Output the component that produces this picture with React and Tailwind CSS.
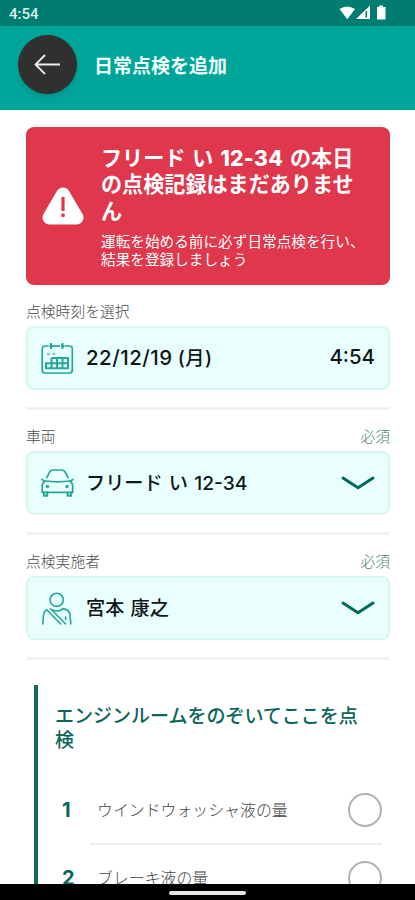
import React, { useState } from "react";

const WarningIcon = () => (
  <svg width="42" height="38" viewBox="0 0 42 38" className="shrink-0">
    <path
      d="M21 7.5 L34.5 30.5 H7.5 Z"
      fill="#fff"
      stroke="#fff"
      strokeWidth="14"
      strokeLinejoin="round"
    />
    <path d="M21 10 V24" stroke="#df374b" strokeWidth="3.2" />
    <rect x="19.3" y="26.5" width="3.5" height="3.5" rx="1" fill="#df374b" />
  </svg>
);

const CalendarIcon = () => (
  <svg width="33" height="33" viewBox="0 0 33 33" fill="none" stroke="#26a69a" strokeWidth="1.7" className="shrink-0">
    <path d="M7.5 4 H4 Q1.2 4 1.2 7 V28 Q1.2 31 4 31 H28.5 Q31.3 31 31.3 28 V7 Q31.3 4 28.5 4 H24" />
    <path d="M12 4 H19" />
    <path d="M10 1 V7 M21.5 1 V7" strokeWidth="2" />
    <path d="M8.5 4 H12 M20 4 H23.5" strokeWidth="2" />
    <path d="M10.5 16 H27 V26.3 H5 V21.2 H27 M10.5 16 V26.3 M16 16 V26.3 M21.5 16 V26.3" strokeWidth="2" strokeLinejoin="round" />
    <path d="M6 12 H9 M11.5 12 H14.5" strokeWidth="2.4" opacity="0.5" />
  </svg>
);

const CarIcon = () => (
  <svg width="33" height="28" viewBox="0 0 33 28" fill="none" stroke="#26a69a" strokeWidth="1.7" strokeLinecap="round" strokeLinejoin="round" className="shrink-0">
    <path d="M5.8 8.5 L8.3 3.6 Q9.7 1 12.3 1 H20.5 Q23.1 1 24.5 3.6 L27 8.5" />
    <path d="M4 12 Q16.5 13.6 29 12 Q31.7 14 31.7 17.5 V23.3 H1.2 V17.5 Q1.2 14 4 12 Z" />
    <path d="M2.9 23.5 V26.8 H6.3 V23.5 M26.7 23.5 V26.8 H30.1 V23.5" strokeWidth="2" />
    <path d="M1 10.5 L3.5 12 M32 10.5 L29.5 12" />
    <circle cx="6.5" cy="17.6" r="0.9" />
    <circle cx="26" cy="17.6" r="0.9" />
  </svg>
);

const DriverIcon = () => (
  <svg width="33" height="33" viewBox="0 0 33 33" fill="none" stroke="#26a69a" strokeWidth="1.6" strokeLinecap="round" strokeLinejoin="round" className="shrink-0">
    <circle cx="15.7" cy="7.8" r="6.6" />
    <path d="M1.8 32 L2.4 23.5 Q3 19 5.8 17.8 L19.6 32" />
    <path d="M9.6 16.8 L24.6 32" />
    <path d="M11.8 18 Q18.5 20.5 22 16.6 Q28 17.5 29 22.5 L29.8 32" />
    <path d="M24.6 25 V27.5" />
  </svg>
);

const Chevron = () => (
  <svg width="34" height="14" viewBox="0 0 34 14" fill="none" className="shrink-0">
    <path d="M2 2 L17 11.8 L32 2" stroke="#00685b" strokeWidth="3" strokeLinecap="round" />
  </svg>
);

const StatusBar = () => (
  <div className="h-[26px] bg-[#007c70] flex items-center justify-between pl-[9px] pr-[28px]">
    <span className="font-[Roboto] text-[15px] font-medium text-[#d9f2ef] leading-none mt-[2px]">4:54</span>
    <div className="flex items-center">
      <svg width="48" height="16" viewBox="0 0 48 16" fill="#fff">
        <path d="M0.5 4 Q8 -1.2 16 4 L8.3 14.2 Z" />
        <path d="M17 14 L31 0.5 V14 Z" />
        <path d="M27.3 6 V12.5" stroke="#007c70" strokeWidth="1.6" />
        <path d="M38 2 H40 V0.5 H44 V2 H46.5 V14.5 H38 Z" />
      </svg>
    </div>
  </div>
);

const Field = ({ label, required, icon, value, right }) => (
  <div className="h-[125px] flex flex-col border-b-3 border-[#f2f2f3]">
    <div className="h-[41px] flex items-end justify-between text-[14.8px] leading-[28px] font-light">
      <span className="text-[#4b4b4b]">{label}</span>
      {required && <span className="text-[#4e7d74]">必須</span>}
    </div>
    <button className="h-[64px] w-full rounded-lg border-2 border-[#d6f6f1] bg-[#e8fffd] flex items-center pl-[13px] pr-[13px] text-left">
      {icon}
      <span className="ml-[12px] flex-1 text-[19.2px] leading-[28px] font-medium text-[#101616] [word-spacing:1px]">
        {value}
      </span>
      {right}
    </button>
  </div>
);

const checks = [
  { id: 1, name: "ウインドウォッシャ液の量" },
  { id: 2, name: "ブレーキ液の量" },
];

const App = () => {
  const [done, setDone] = useState([]);

  const toggle = (id) => {
    setDone((prev) => (prev.includes(id) ? prev.filter((d) => d !== id) : [...prev, id]));
  };

  return (
    <div
      lang="ja"
      className="w-[415px] h-[900px] overflow-hidden bg-white flex flex-col font-['Inter','Noto_Sans_CJK_JP',sans-serif]"
    >
      <StatusBar />

      {/* header */}
      <div className="h-[84px] shrink-0 bg-[#00a599] flex items-start pl-[18px] pt-[9px]">
        <button className="w-[59px] h-[59px] rounded-full bg-[#303030] flex items-center justify-center pr-[2px] shadow-md">
          <svg width="28" height="22" viewBox="0 0 28 22" fill="none" stroke="#eee" strokeWidth="1.8">
            <path d="M27 10.5 H2 M12 1 L2.5 10.5 L12 20" />
          </svg>
        </button>
        <h1 className="ml-[17px] mt-[18px] text-[19px] leading-[28px] font-bold text-[#effffd]">日常点検を追加</h1>
      </div>

      <div className="flex-1 min-h-0 overflow-hidden pl-[26px] pr-[25px] pt-[17px]">
        {/* alert */}
        <div className="h-[158px] rounded-lg bg-[#df374b] text-white flex items-center pl-[16px]">
          <WarningIcon />
          <div className="ml-[17px] pt-[3px] whitespace-nowrap">
            <p className="text-[21.1px] leading-[26.5px] font-bold">
              <span className="[word-spacing:2px]">
                フリード い <span className="font-extrabold tracking-[0.3px]">12-34</span> の本日
              </span>
              <br />
              の点検記録はまだありませ
              <br />ん
            </p>
            <p className="mt-[8px] text-[14.65px] leading-[18px]">
              運転を始める前に必ず日常点検を行い、
              <br />
              結果を登録しましょう
            </p>
          </div>
        </div>

        <Field
          label="点検時刻を選択"
          icon={<CalendarIcon />}
          value={
            <span className="[word-spacing:0px]">
              <span className="text-[20.4px] tracking-[0.5px]">22/12/19</span> <span className="tracking-[0.5px]">(月)</span>
            </span>
          }
          right={<span className="text-[20.4px] leading-[28px] pb-[3px] font-medium text-[#101616]">4:54</span>}
        />
        <Field label="車両" required icon={<CarIcon />} value="フリード い 12-34" right={<Chevron />} />
        <Field label="点検実施者" required icon={<DriverIcon />} value="宮本 康之" right={<Chevron />} />

        {/* checklist */}
        <div className="mt-[25px] ml-[8px] h-[260px] border-l-[4px] border-[#15695c] pl-[17px] pt-[20px]">
          <h2 className="text-[19px] leading-[23.5px] font-medium text-[#0c665a] whitespace-nowrap">
            エンジンルームをのぞいてここを点
            <br />検
          </h2>
          <div className="mt-[25px]">
            {checks.map((item) => (
              <div key={item.id} className="flex h-[68px]">
                <span className="w-[35px] pl-[7px] text-[20px] leading-[66px] font-bold text-[#0c665a]">{item.id}</span>
                <div className="flex-1 mr-[8px] pl-[7px] flex items-center justify-between border-b-2 border-[#ececec]">
                  <span className="pt-[2px] text-[15.9px] font-light text-[#444]">{item.name}</span>
                  <button
                    onClick={() => toggle(item.id)}
                    className={`w-[34px] h-[34px] rounded-full border-2 border-[#b3b3b3] ${
                      done.includes(item.id) ? "bg-[#00a599]" : ""
                    }`}
                  />
                </div>
              </div>
            ))}
          </div>
        </div>
      </div>

      {/* navigation bar */}
      <div className="h-[16px] shrink-0 bg-black flex justify-center pt-[7px]">
        <div className="w-[77px] h-[4px] rounded-full bg-[#e6e6e6]" />
      </div>
    </div>
  );
};

export default App;
